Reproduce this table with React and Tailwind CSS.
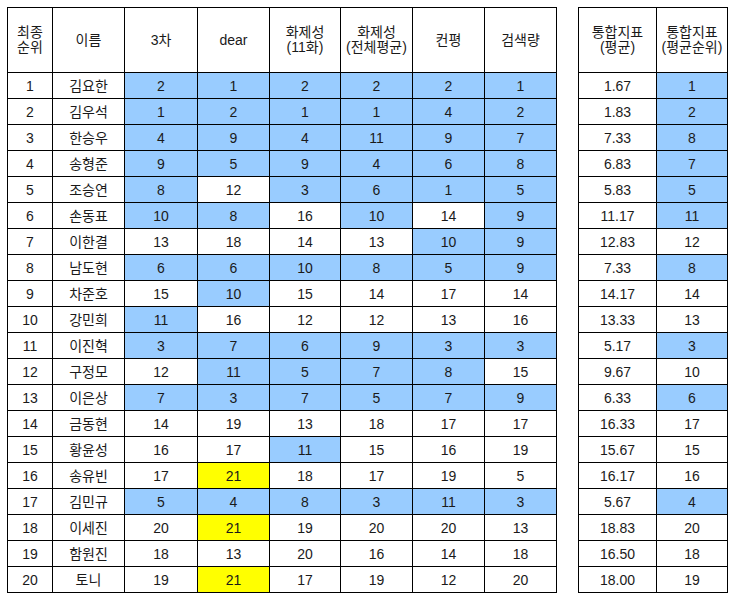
import React from "react";

// B = blue, Y = yellow, W = white
const rows = [
  ["김요한", [2, 1, 2, 2, 2, 1], "BBBBBB", "1.67", 1, "B"],
  ["김우석", [1, 2, 1, 1, 4, 2], "BBBBBB", "1.83", 2, "B"],
  ["한승우", [4, 9, 4, 11, 9, 7], "BBBBBB", "7.33", 8, "B"],
  ["송형준", [9, 5, 9, 4, 6, 8], "BBBBBB", "6.83", 7, "B"],
  ["조승연", [8, 12, 3, 6, 1, 5], "BWBBBB", "5.83", 5, "B"],
  ["손동표", [10, 8, 16, 10, 14, 9], "BBWBWB", "11.17", 11, "B"],
  ["이한결", [13, 18, 14, 13, 10, 9], "WWWWBB", "12.83", 12, "W"],
  ["남도현", [6, 6, 10, 8, 5, 9], "BBBBBB", "7.33", 8, "B"],
  ["차준호", [15, 10, 15, 14, 17, 14], "WBWWWW", "14.17", 14, "W"],
  ["강민희", [11, 16, 12, 12, 13, 16], "BWWWWW", "13.33", 13, "W"],
  ["이진혁", [3, 7, 6, 9, 3, 3], "BBBBBB", "5.17", 3, "B"],
  ["구정모", [12, 11, 5, 7, 8, 15], "WBBBBW", "9.67", 10, "W"],
  ["이은상", [7, 3, 7, 5, 7, 9], "BBBBBB", "6.33", 6, "B"],
  ["금동현", [14, 19, 13, 18, 17, 17], "WWWWWW", "16.33", 17, "W"],
  ["황윤성", [16, 17, 11, 15, 16, 19], "WWBWWW", "15.67", 15, "W"],
  ["송유빈", [17, 21, 18, 17, 19, 5], "WYWWWW", "16.17", 16, "W"],
  ["김민규", [5, 4, 8, 3, 11, 3], "BBBBBB", "5.67", 4, "B"],
  ["이세진", [20, 21, 19, 20, 20, 13], "WYWWWW", "18.83", 20, "W"],
  ["함원진", [18, 13, 20, 16, 14, 18], "WWWWWW", "16.50", 18, "W"],
  ["토니", [19, 21, 17, 19, 12, 20], "WYWWWW", "18.00", 19, "W"],
];

const fill = {
  B: "bg-[#99ccff]",
  Y: "bg-[#ffff00]",
  W: "bg-white",
};

function Cell({ children, color = "W", head }) {
  return (
    <div
      className={`${fill[color]} flex items-center justify-center text-center ${
        head ? "leading-[15px]" : "leading-none"
      }`}
    >
      {children}
    </div>
  );
}

function Head({ lines }) {
  return (
    <Cell head>
      <div>
        {lines.map((l) => (
          <div key={l}>{l}</div>
        ))}
      </div>
    </Cell>
  );
}

export default function App() {
  return (
    <div
      className="flex items-start gap-[21px] bg-white p-[7px] text-[14px] text-[#1a1a1a]"
      style={{ fontFamily: '"Liberation Sans", "Noto Sans CJK KR", sans-serif' }}
    >
      <div className="grid grid-cols-[44px_71px_72px_71px_70px_71px_71px_71px] grid-rows-[64px_repeat(20,25px)] gap-px bg-black p-px">
        <Head lines={["최종", "순위"]} />
        <Head lines={["이름"]} />
        <Head lines={["3차"]} />
        <Head lines={["dear"]} />
        <Head lines={["화제성", "(11화)"]} />
        <Head lines={["화제성", "(전체평균)"]} />
        <Head lines={["컨평"]} />
        <Head lines={["검색량"]} />
        {rows.map(([name, vals, marks], i) => (
          <React.Fragment key={name}>
            <Cell>{i + 1}</Cell>
            <Cell>{name}</Cell>
            {vals.map((v, j) => (
              <Cell key={j} color={marks[j]}>
                {v}
              </Cell>
            ))}
          </React.Fragment>
        ))}
      </div>

      <div className="grid grid-cols-[77px_70px] grid-rows-[64px_repeat(20,25px)] gap-px bg-black p-px">
        <Head lines={["통합지표", "(평균)"]} />
        <Head lines={["통합지표", "(평균순위)"]} />
        {rows.map(([name, , , avg, rank, mark]) => (
          <React.Fragment key={name}>
            <Cell>{avg}</Cell>
            <Cell color={mark}>{rank}</Cell>
          </React.Fragment>
        ))}
      </div>
    </div>
  );
}
